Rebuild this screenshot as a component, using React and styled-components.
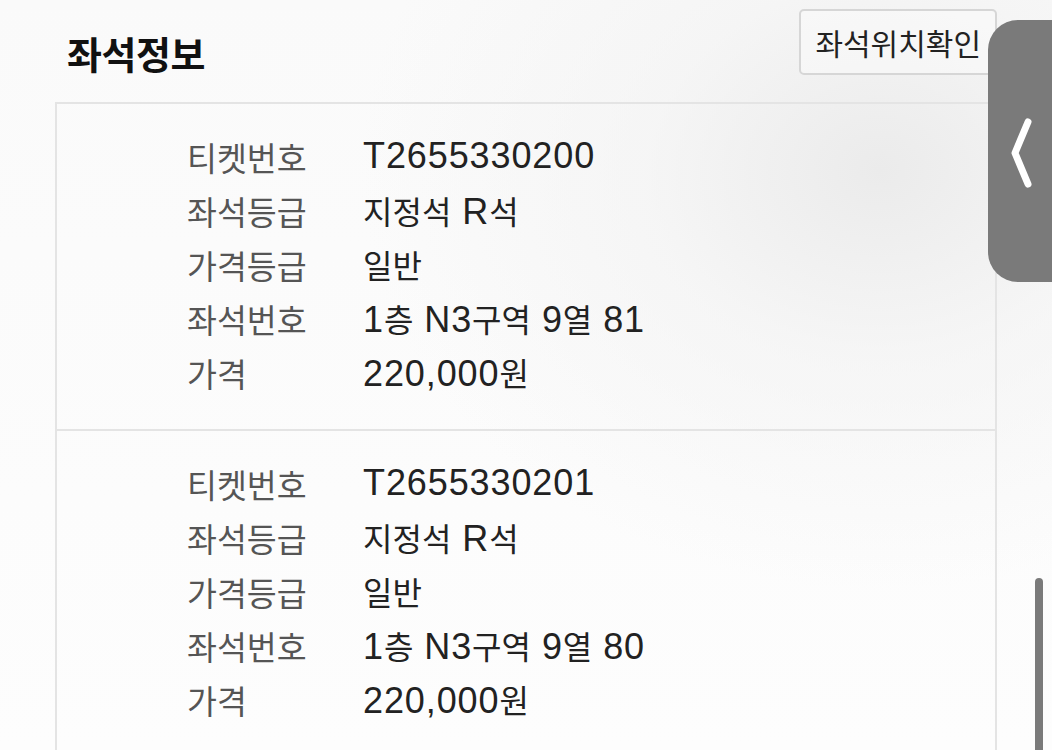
import styled, { createGlobalStyle } from 'styled-components';

const GlobalStyle = createGlobalStyle`
  html, body {
    margin: 0;
    padding: 0;
  }
  body {
    font-family: "Liberation Sans", "Noto Sans CJK KR", sans-serif;
    background: #fff;
  }
`;

const tickets = [
  { no: 'T2655330200', grade: '지정석 R석', priceGrade: '일반', seat: '1층 N3구역 9열 81', price: '220,000원' },
  { no: 'T2655330201', grade: '지정석 R석', priceGrade: '일반', seat: '1층 N3구역 9열 80', price: '220,000원' },
];

const Page = styled.div`
  position: relative;
  width: 1052px;
  height: 750px;
  overflow: hidden;
  background:
    radial-gradient(ellipse 520px 420px at 880px 170px, #ebebeb 0%, rgba(242, 242, 242, 0.6) 45%, rgba(255, 255, 255, 0) 100%),
    linear-gradient(180deg, #fafafa 0%, #fdfdfd 100%);
`;

const Header = styled.div`
  height: 102px;
  display: flex;
  justify-content: space-between;
  align-items: flex-start;
  padding: 0 55px 0 67px;
  box-sizing: border-box;
`;

const Title = styled.h1`
  margin: 25px 0 0;
  font-family: "Noto Sans CJK KR", sans-serif;
  font-size: 38px;
  font-weight: 700;
  color: #111;
  letter-spacing: -0.5px;
`;

const LocationButton = styled.button`
  margin-top: 9px;
  height: 66px;
  padding: 0 14px;
  font-family: "Noto Sans CJK KR", sans-serif;
  font-size: 30px;
  color: #222;
  background: rgba(250, 250, 250, 0.6);
  border: 2px solid #d6d6d6;
  border-radius: 5px;
`;

const Card = styled.div`
  margin: 0 55px 0 55px;
  border: 2px solid #e4e4e4;
  border-bottom: none;
`;

const Section = styled.div`
  padding: 25px 0 30px 130px;

  & + & {
    border-top: 2px solid #e4e4e4;
  }
`;

const Row = styled.div`
  display: grid;
  grid-template-columns: 176px 1fr;
  height: 54px;
  align-items: center;
`;

const Label = styled.span`
  font-family: "Noto Sans CJK KR", sans-serif;
  font-size: 32.5px;
  color: #555;
`;

const Value = styled.span`
  font-size: 36px;
  color: #222;
  letter-spacing: 0.9px;
`;

const Hangul = styled.span`
  font-family: "Noto Sans CJK KR", sans-serif;
  font-size: 32px;
  letter-spacing: 0;
`;

const SideTab = styled.div`
  position: absolute;
  top: 20px;
  left: 988px;
  width: 90px;
  height: 262px;
  background: #7a7a7a;
  border-radius: 30px 0 0 30px;
  display: flex;
  align-items: flex-start;
  padding: 96px 0 0 20px;
  box-sizing: border-box;
`;

const ScrollThumb = styled.div`
  position: absolute;
  left: 1035px;
  top: 578px;
  width: 8px;
  height: 190px;
  border-radius: 4px;
  background: #7a7a7a;
`;

function MixedText({ text }) {
  const parts = text.split(/([\uac00-\ud7a3]+)/).filter(Boolean);
  return parts.map((p, i) =>
    /[\uac00-\ud7a3]/.test(p) ? <Hangul key={i}>{p}</Hangul> : <span key={i}>{p}</span>
  );
}

function TicketSection({ ticket }) {
  const rows = [
    ['티켓번호', ticket.no],
    ['좌석등급', ticket.grade],
    ['가격등급', ticket.priceGrade],
    ['좌석번호', ticket.seat],
    ['가격', ticket.price],
  ];

  return (
    <Section>
      {rows.map(([label, value]) => (
        <Row key={label}>
          <Label>{label}</Label>
          <Value>
            <MixedText text={value} />
          </Value>
        </Row>
      ))}
    </Section>
  );
}

export default function App() {
  return (
    <Page>
      <GlobalStyle />
      <Header>
        <Title>좌석정보</Title>
        <LocationButton>좌석위치확인</LocationButton>
      </Header>
      <Card>
        {tickets.map(t => (
          <TicketSection key={t.no} ticket={t} />
        ))}
      </Card>
      <SideTab>
        <svg width="26" height="74" viewBox="0 0 26 74">
          <path d="M20 6 L7 37 L20 68" fill="none" stroke="#fff" strokeWidth="7" strokeLinecap="round" strokeLinejoin="round" />
        </svg>
      </SideTab>
      <ScrollThumb />
    </Page>
  );
}
